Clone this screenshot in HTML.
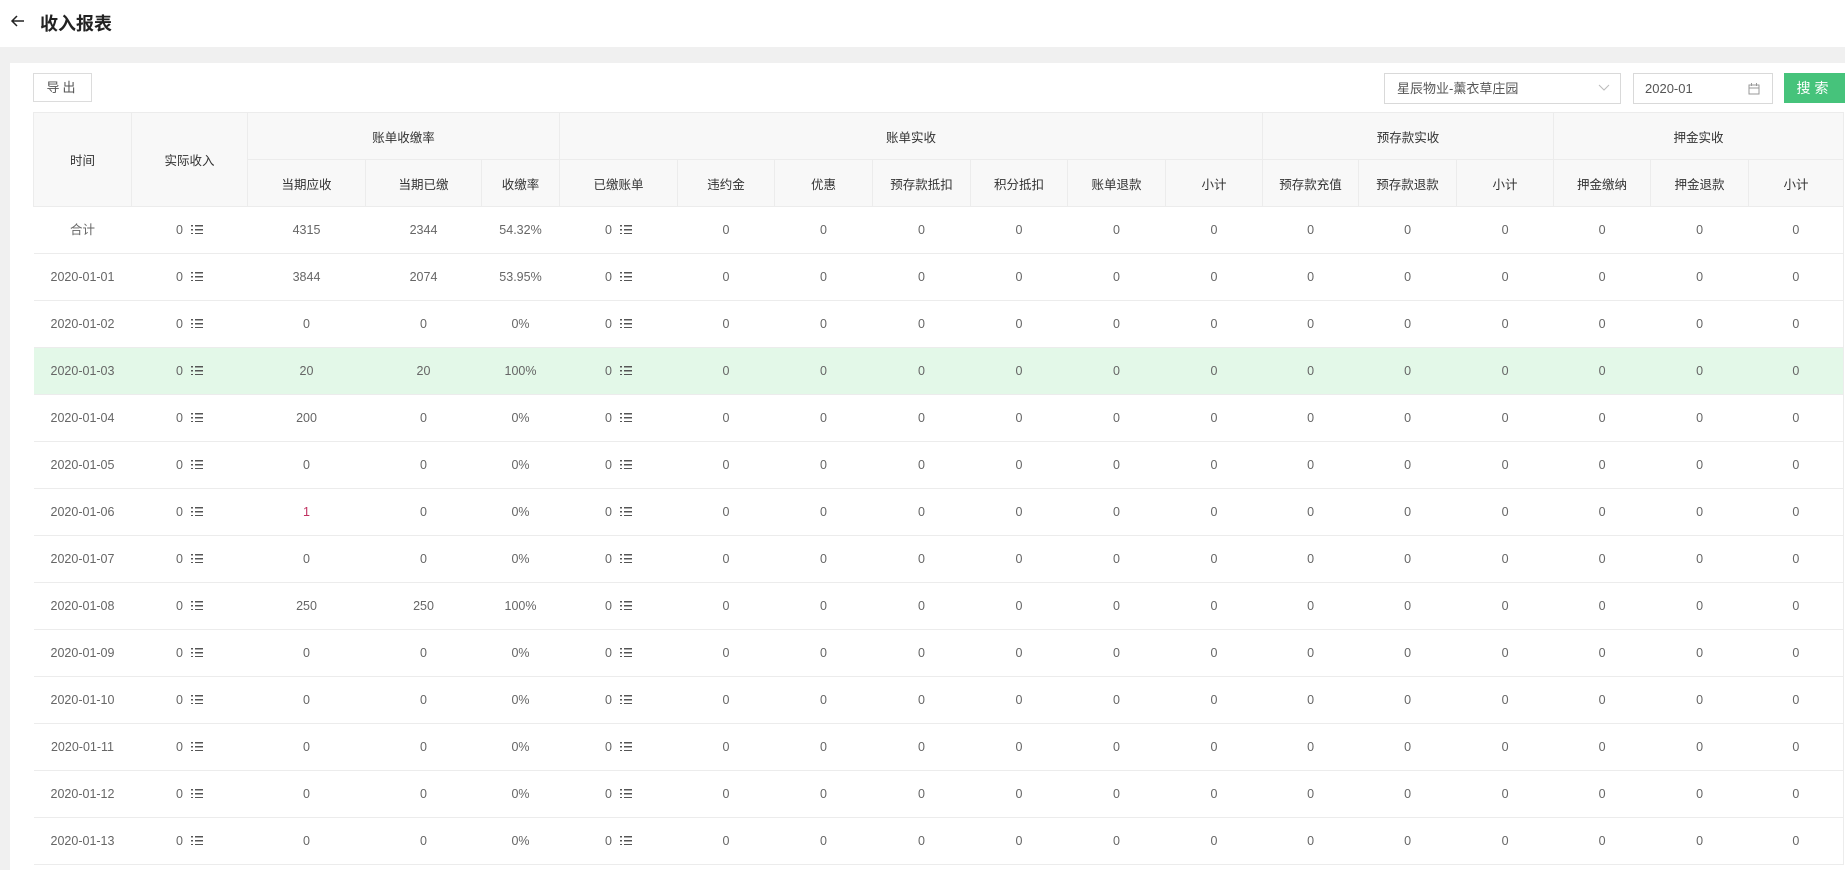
<!DOCTYPE html>
<html><head><meta charset="utf-8"><style>
*{box-sizing:border-box;margin:0;padding:0}
body{width:1845px;height:870px;overflow:hidden;background:#f0f0f0;font-family:"Liberation Sans","Noto Sans CJK SC",sans-serif;position:relative}
.hdr{position:absolute;left:0;top:0;width:1845px;height:47px;background:#fff}
.hdr .t{position:absolute;left:40px;top:10px;font-size:18px;font-weight:bold;color:#222}
.hdr svg{position:absolute;left:10px;top:13px}
.panel{position:absolute;left:10px;top:63px;width:1835px;height:807px;background:#fff}
.btn{position:absolute;left:33px;top:73px;width:59px;height:29px;border:1px solid #dcdcdc;font-size:13px;color:#555;text-align:center;line-height:27px;letter-spacing:3px;background:#fff}
.sel{position:absolute;left:1384px;top:73px;width:237px;height:31px;border:1px solid #d9d9d9;font-size:13px;color:#555;padding-left:12px;line-height:29px;background:#fff}
.date{position:absolute;left:1633px;top:73px;width:140px;height:31px;border:1px solid #d9d9d9;font-size:13px;color:#555;padding-left:11px;line-height:29px;background:#fff}
.go{position:absolute;left:1784px;top:73px;width:61px;height:30px;background:#46c37b;color:#fff;font-size:14px;text-align:center;line-height:30px;letter-spacing:4px}
table{position:absolute;left:33px;top:112px;width:1810px;border-collapse:collapse;table-layout:fixed;font-size:12.5px;border-right:1px solid #ececec}
th{background:#f8f8f8;color:#333;font-weight:normal;height:47px;border:1px solid #ececec;text-align:center}
td{height:47px;line-height:46px;padding:0;border-bottom:1px solid #ececec;text-align:center;color:#666}
tr.hl td{background:#e3f8e8}
.ic{display:inline-block;width:12px;height:9px;margin-left:8px;vertical-align:0px;background:
linear-gradient(#555,#555) 0 0/2px 1.5px no-repeat,linear-gradient(#555,#555) 0 50%/2px 1.5px no-repeat,linear-gradient(#555,#555) 0 100%/2px 1.5px no-repeat,
linear-gradient(#555,#555) 4px 0/8px 1.5px no-repeat,linear-gradient(#555,#555) 4px 50%/8px 1.5px no-repeat,linear-gradient(#555,#555) 4px 100%/8px 1.5px no-repeat}
.r{color:#c03060}
</style></head><body>
<div class="hdr"><svg width="16" height="16" viewBox="0 0 16 16"><path d="M14 8H2M7 3L2 8l5 5" fill="none" stroke="#222" stroke-width="1.5"/></svg><div class="t">收入报表</div></div>
<div class="panel"></div>
<div class="btn">导出</div>
<div class="sel">星辰物业-薰衣草庄园<svg style="position:absolute;right:10px;top:10px" width="12" height="8" viewBox="0 0 12 8"><path d="M1 1l5 5 5-5" fill="none" stroke="#bbb"/></svg></div>
<div class="date">2020-01<svg style="position:absolute;right:12px;top:8px" width="12" height="13" viewBox="0 0 12 13"><path d="M1 3h10v9H1zM1 6h10M3.5 1v3M8.5 1v3" fill="none" stroke="#999"/></svg></div>
<div class="go">搜索</div>
<table>
<colgroup><col style="width:98px"><col style="width:116px"><col style="width:118px"><col style="width:116px"><col style="width:78px"><col style="width:118px"><col style="width:97px"><col style="width:98px"><col style="width:98px"><col style="width:97px"><col style="width:98px"><col style="width:97px"><col style="width:96px"><col style="width:98px"><col style="width:97px"><col style="width:97px"><col style="width:98px"><col style="width:95px"></colgroup>
<thead>
<tr><th rowspan="2">时间</th><th rowspan="2">实际收入</th><th colspan="3">账单收缴率</th><th colspan="7">账单实收</th><th colspan="3">预存款实收</th><th colspan="3">押金实收</th></tr>
<tr><th>当期应收</th><th>当期已缴</th><th>收缴率</th><th>已缴账单</th><th>违约金</th><th>优惠</th><th>预存款抵扣</th><th>积分抵扣</th><th>账单退款</th><th>小计</th><th>预存款充值</th><th>预存款退款</th><th>小计</th><th>押金缴纳</th><th>押金退款</th><th>小计</th></tr>
</thead>
<tbody id="tb"></tbody>
</table>
<script>
var rows=[["合计","4315","2344","54.32%"],["2020-01-01","3844","2074","53.95%"],["2020-01-02","0","0","0%"],["2020-01-03","20","20","100%"],["2020-01-04","200","0","0%"],["2020-01-05","0","0","0%"],["2020-01-06","<span class=r>1</span>","0","0%"],["2020-01-07","0","0","0%"],["2020-01-08","250","250","100%"],["2020-01-09","0","0","0%"],["2020-01-10","0","0","0%"],["2020-01-11","0","0","0%"],["2020-01-12","0","0","0%"],["2020-01-13","0","0","0%"]];
var h="";rows.forEach(function(r,i){h+='<tr'+(i==3?' class="hl"':'')+'><td>'+r[0]+'</td><td>0<span class="ic"></span></td><td>'+r[1]+'</td><td>'+r[2]+'</td><td>'+r[3]+'</td><td>0<span class="ic"></span></td>';for(var k=0;k<12;k++)h+='<td>0</td>';h+='</tr>';});
document.getElementById("tb").innerHTML=h;
</script>
</body></html>
